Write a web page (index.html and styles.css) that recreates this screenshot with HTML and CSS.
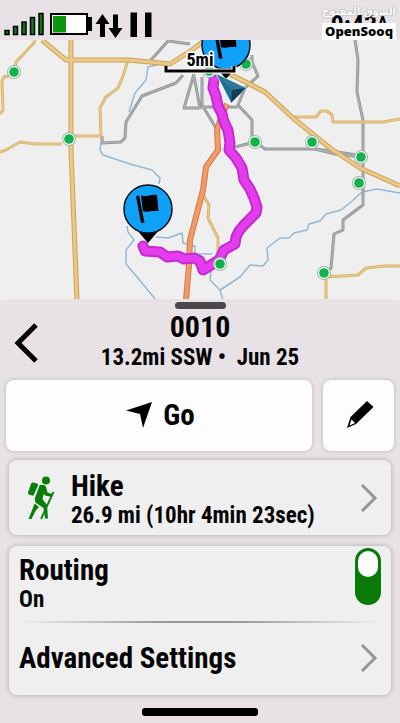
FILE: index.html
```html
<!DOCTYPE html>
<html lang="en">
<head>
    <meta charset="UTF-8">
    <meta name="viewport" content="width=device-width, initial-scale=1.0">
    <title>Route 0010</title>
    <link rel="stylesheet" href="styles.css">
</head>
<body>
    <header class="status-bar">
        <svg class="status-icons" width="154" height="40" viewBox="0 0 154 40" role="img" aria-label="Signal, battery, data, paused">
            <!-- signal -->
            <g fill="#0d7a1a" stroke="#000" stroke-width="1.5">
                <rect x="5" y="30.5" width="4" height="4"/>
                <rect x="13.5" y="26.5" width="4" height="8"/>
                <rect x="22" y="22" width="4" height="12.500"/>
                <rect x="30.500" y="17.500" width="4" height="17"/>
                <rect x="39" y="13.500" width="4" height="21"/>
            </g>
            <!-- battery -->
            <rect x="51" y="14" width="36" height="20" fill="#fff" stroke="#000" stroke-width="2"/>
            <rect x="53" y="16" width="13" height="16.500" fill="#0c960c"/>
            <path d="M88 17h4v14h-4z"/>
            <!-- up / down arrows -->
            <path d="M102.500 14l7 10h-4.500v13h-5V24h-4.500z"/>
            <path d="M115.500 38l-7-10h4.500V14.500h5V28h4.500z"/>
            <!-- pause -->
            <path d="M130.500 12.500h6.500v24.500h-6.500zM145 12.500h6.500v24.500H145z"/>
        </svg>
        <time class="clock">9:43<span class="meridiem">A</span></time>
        <div class="watermark">
            <span class="watermark-ar" lang="ar" dir="rtl">السوق المفتوح</span>
            <span class="watermark-en">OpenSooq</span>
        </div>
    </header>

    <svg class="map" viewBox="0 40 400 260" preserveAspectRatio="xMidYMin slice" role="img" aria-label="Route map">
        <defs>
            <g id="town">
                <circle r="7" fill="#9fb5a6"/>
                <circle r="6" fill="#f4fff6"/>
                <circle r="4.800" fill="#13b04e"/>
            </g>
            <g id="pin">
                <path d="M-12 20L0 34L12 20z"/>
                <circle r="24" fill="#0fa0fa" stroke="#04121c" stroke-width="1.500"/>
                <path d="M-12 -13l3-.5 5.500 27-3.500.500z"/>
                <path d="M-7 -13.500q4 1 8 0t8-.5l1.500 16q-4-.5-8 .3t-7.500 0z"/>
            </g>
            <path id="minor" d="M35 40L34 43L16 62L14 72L12 75L4 77L2 81L3 110L0 114M128 60L123 76L118 88L106 97L100 108L101 136L72 136M0 152L6 150L20 142L36 144L62 144M203 195L209 205L208 218L212 226L218 238L218 252M293 117H316L321 111H327L332 115L333 122H383L400 119M326 277L358 275L366 268L385 266H400M326 277V300"/>
            <path id="major" d="M71 40V150L73 200L77 300M42 40L66 60H128L170 64L192 50L205 40M230 74L265 92L293 118L330 148L360 168L400 186"/>
            <path id="grey" d="M183 75L176 83L142 96L126 122L125 138L121 142L102 143L102 136M151 60L168 41L190 44M194 74L184 108H200L194 76M355 40L358 60L357 92L363 120L363 205L343 220V230L334 234L331 268L325 273M252 55L252 62L258 76L245 88L238 105L252 120V140M202 77V105L216 128L219 146M202 107H238M235 147L255 142L265 149H315L335 154L362 157M316 149L358 155"/>
            <path id="highway" d="M227 104L222 115L217 130L218 150L206 167L203 190L197 213L190 240L189 265L186 300"/>
            <path id="track" d="M214 80L213 88L216 96L218 106L222 114L224 122L228 130L230 143L229 150L236 158L242 168L244 180L250 189L254 198L257 207L256 213L250 219L244 225L239 231L236 237L235 244L224 250L219 260L211 265L203 270L200 261L194 258L184 259L178 256L167 257L160 252L145 251L143 246"/>
        </defs>

        <rect y="40" width="400" height="260" fill="#efefef"/>

        <!-- rivers -->
        <path class="line river" d="M166 63L148 67L146 80L135 93L129 112M101 143L100 150L103 155L130 164L152 170L160 178L159 184M127 226L128 232L134 240L126 250V264L137 277L156 300M156 237L168 238L182 233L183 243L195 246V254H212M223 300L220 290L240 277L250 265L263 266L268 260L267 248L280 238H289L294 233L307 230L309 224L320 221L326 214L341 210L351 202L362 192L377 189L400 193M220 290L210 280L211 270"/>

        <!-- roads -->
        <use href="#grey" class="line grey-edge"/>
        <use href="#grey" class="line grey-fill"/>
        <use href="#minor" class="line minor-edge"/>
        <use href="#minor" class="line minor-fill"/>
        <use href="#major" class="line major-edge"/>
        <use href="#major" class="line major-fill"/>
        <use href="#highway" class="line highway-edge"/>
        <use href="#highway" class="line highway-fill"/>

        <!-- recorded track -->
        <use href="#track" class="line track-edge"/>
        <use href="#track" class="line track-fill"/>

        <use href="#town" x="14" y="72"/>
        <use href="#town" x="69" y="139"/>
        <use href="#town" x="255" y="142"/>
        <use href="#town" x="312" y="142"/>
        <use href="#town" x="361" y="157"/>
        <use href="#town" x="359" y="183"/>
        <use href="#town" x="220" y="264"/>
        <use href="#town" x="324" y="273"/>
        <use href="#town" x="246" y="64"/>
        <use href="#town" x="209" y="71"/>

        <use href="#pin" x="226" y="45"/>
        <use href="#pin" x="148" y="209"/>

        <!-- current position -->
        <path d="M216 74L246 88L231 103z" fill="#1f6d93" stroke="#dff1f6" stroke-width="1"/>
        <path d="M216 74L246 88L232 90z" fill="#2d7797"/>
        <path d="M232 90L246 88L231 103z" fill="#123f57"/>

        <!-- scale -->
        <path class="scale-halo" d="M166 66V71H234V66"/>
        <path class="scale-bar" d="M166 66V71H234V66"/>
        <text class="scale-text" x="200" y="66">5mi</text>
    </svg>

    <main class="sheet">
        <div class="handle"></div>

        <div class="sheet-header">
            <button class="back" type="button" aria-label="Back">
                <svg width="26" height="42" viewBox="0 0 26 42"><path d="M22 3L4 21L22 39" fill="none" stroke="#000" stroke-width="5"/></svg>
            </button>
            <div class="titles">
                <h1 class="title">0010</h1>
                <p class="detail">13.2mi SSW •&nbsp; Jun 25</p>
            </div>
        </div>

        <div class="actions">
            <button class="action go" type="button">
                <svg width="28" height="28" viewBox="0 0 28 28"><path d="M27 1L18 27L15 13L1 9.500z"/></svg>
                Go
            </button>
            <button class="action edit" type="button" aria-label="Edit">
                <svg width="28" height="28" viewBox="0 0 28 28">
                    <path d="M21 0L27.500 6L10 23L1 27L4.500 16z"/>
                    <path d="M5.500 18.500L9 22L3.500 24.500z" fill="#fff"/>
                </svg>
            </button>
        </div>

        <button class="card activity" type="button">
            <svg class="hiker" width="28" height="44" viewBox="0 0 28 44">
                <g fill="#0a7d0a">
                    <circle cx="19" cy="4.500" r="4"/>
                    <path d="M6 6.500L10 7.500Q11.500 8 11 9.500L7 18.500Q6.500 20 5 19.500L2 18.500Q.5 18 1 16.500L4 8Q4.500 6 6 6.500z"/>
                    <path d="M12.500 9.500Q16 7.500 19 10.500L20.500 16.500L25.500 18L25 21L18 19.500L16.500 18L15.500 23L20 29L21 42.500H18L16.500 32L9 27Q7.500 25.500 8 22z"/>
                    <path d="M7.500 27.500L12 31L8.500 35L4.500 43H1.500L5.500 33z"/>
                </g>
                <path d="M26.500 16L14 43" fill="none" stroke="#0a7d0a" stroke-width="1.800"/>
            </svg>
            <span class="activity-text">
                <span class="label">Hike</span>
                <span class="value">26.9 mi (10hr 4min 23sec)</span>
            </span>
            <svg class="chevron" width="18" height="30" viewBox="0 0 18 30"><path d="M2 2L15 15L2 28"/></svg>
        </button>

        <div class="card settings">
            <div class="routing">
                <label class="routing-text" for="routing">
                    <span class="label">Routing</span>
                    <span class="value">On</span>
                </label>
                <input class="toggle" type="checkbox" id="routing" checked>
            </div>
            <div class="divider"></div>
            <button class="advanced" type="button">
                <span class="label">Advanced Settings</span>
                <svg class="chevron" width="18" height="30" viewBox="0 0 18 30"><path d="M2 2L15 15L2 28"/></svg>
            </button>
        </div>

        <div class="home-bar"></div>
    </main>
</body>
</html>
```

FILE: styles.css
```css
* {
    box-sizing: border-box;
}
body {
    margin: 0;
    background-color: #e8e2e6;
    color: #050505;
    font-family: "Roboto Condensed", "Liberation Sans Narrow", Roboto, sans-serif;
    font-weight: bold;
}
button {
    border: 0;
    padding: 0;
    background: none;
    color: inherit;
    font: inherit;
    text-align: left;
}

/* status bar */
.status-bar {
    position: relative;
    display: flex;
    justify-content: space-between;
    height: 40px;
    padding-right: 12px;
    background-color: #e8e2e6;
}
.status-icons {
    flex: none;
}
.clock {
    display: flex;
    padding-top: 10px;
    font-size: 26px;
    line-height: 30px;
}
.meridiem {
    font-size: 18px;
    line-height: 26px;
}
.watermark {
    position: absolute;
    top: 0;
    right: 4px;
    display: flex;
    flex-direction: column;
    align-items: flex-end;
}
.watermark-ar {
    color: #fff;
    font-family: "DejaVu Sans Condensed", "DejaVu Sans", sans-serif;
    font-size: 11px;
    line-height: 23px;
    white-space: nowrap;
    text-shadow: 0 0 2px #888;
}
.watermark-en {
    padding: 0 3px;
    border-radius: 1px;
    background-color: #fff;
    color: #000;
    font-family: "Noto Sans", sans-serif;
    font-size: 13px;
    font-weight: 900;
    line-height: 17px;
}

/* map */
.map {
    display: block;
    width: 100%;
    height: 260px;
}
.line {
    fill: none;
    stroke-linejoin: round;
}
.river { stroke: #91b9d6; stroke-width: 1.5; }
.grey-edge { stroke: #92979a; stroke-width: 3; }
.grey-fill { stroke: #b5b8ba; stroke-width: 1; }
.minor-edge { stroke: #d9b36b; stroke-width: 3; }
.minor-fill { stroke: #edcf94; stroke-width: 1; }
.major-edge { stroke: #cda256; stroke-width: 5; }
.major-fill { stroke: #ebca89; stroke-width: 3; }
.highway-edge { stroke: #d07a48; stroke-width: 6; }
.highway-fill { stroke: #f39b68; stroke-width: 4; }
.track-edge { stroke: #c22ccd; stroke-width: 11; stroke-linecap: round; }
.track-fill { stroke: #e53cee; stroke-width: 7; stroke-linecap: round; }
.scale-halo { fill: none; stroke: #fff; stroke-width: 5; }
.scale-bar { fill: none; stroke: #000; stroke-width: 3; }
.scale-text {
    font-size: 18px;
    text-anchor: middle;
    stroke: #fff;
    stroke-width: 3px;
    paint-order: stroke;
}

/* bottom sheet */
.sheet {
    position: relative;
    margin-top: -1px;
    padding: 3px 6px 7px;
    border-radius: 12px 12px 0 0;
    background-color: #e8e2e6;
}
.handle {
    width: 51px;
    height: 7px;
    margin: 0 auto;
    border-radius: 4px;
    background-color: #4a484a;
}
.sheet-header {
    display: grid;
    grid-template-columns: 40px 1fr 40px;
    padding-top: 1px;
    padding-bottom: 8px;
}
.back {
    display: flex;
    align-items: center;
    padding: 4px 0 0 8px;
}
.titles {
    text-align: center;
    white-space: nowrap;
}
.title {
    margin: 0;
    font-size: 30px;
    line-height: 34px;
}
.detail {
    margin: 0;
    font-size: 23px;
    line-height: 28px;
}
.actions {
    display: grid;
    grid-template-columns: 1fr 71px;
    gap: 11px;
    margin-bottom: 9px;
}
.action {
    display: flex;
    align-items: center;
    justify-content: center;
    gap: 10px;
    height: 71px;
    padding: 0 0 2px 2px;
    border-radius: 8px;
    background-color: #fdfcfe;
    box-shadow: 0 0 4px #b9b4b8;
    font-size: 29px;
}
.card {
    margin: 0 3px;
    border-radius: 8px;
    background-color: #efefef;
    box-shadow: 0 0 4px 1px #bcb8bb;
}
.label,
.value {
    display: block;
    white-space: nowrap;
}
.label {
    font-size: 29px;
    line-height: 32px;
}
.value {
    font-size: 23px;
    line-height: 28px;
}
.chevron {
    flex: none;
    margin-left: auto;
    fill: none;
    stroke: #969696;
    stroke-width: 3;
}
.activity {
    display: flex;
    align-items: center;
    width: calc(100% - 6px);
    height: 75px;
    margin-bottom: 11px;
    padding: 0 13px 0 18px;
}
.activity-text {
    padding-top: 4px;
}
.hiker {
    margin-right: 16px;
}
.settings {
    padding: 2px 10px 12px;
}
.routing {
    display: flex;
    justify-content: space-between;
    height: 73px;
}
.routing-text {
    padding-top: 6px;
}
.toggle {
    appearance: none;
    width: 26px;
    height: 57px;
    margin: 0;
    padding: 3px;
    border-radius: 13px;
    background-color: #9a9a9a;
}
.toggle::before {
    content: "";
    display: block;
    width: 20px;
    height: 26px;
    border-radius: 10px;
    background-color: #fff;
}
.toggle:checked {
    background-color: #087a08;
}
.toggle:not(:checked)::before {
    margin-top: 25px;
}
.divider {
    height: 2px;
    background: linear-gradient(to right, transparent, #969896 40%, #969896 60%, transparent);
}
.advanced {
    display: flex;
    align-items: center;
    width: 100%;
    height: 60px;
    padding: 10px 3px 0 0;
}
.home-bar {
    width: 116px;
    height: 8px;
    margin: 13px auto 0;
    border-radius: 3px;
    background-color: #000;
}
```
